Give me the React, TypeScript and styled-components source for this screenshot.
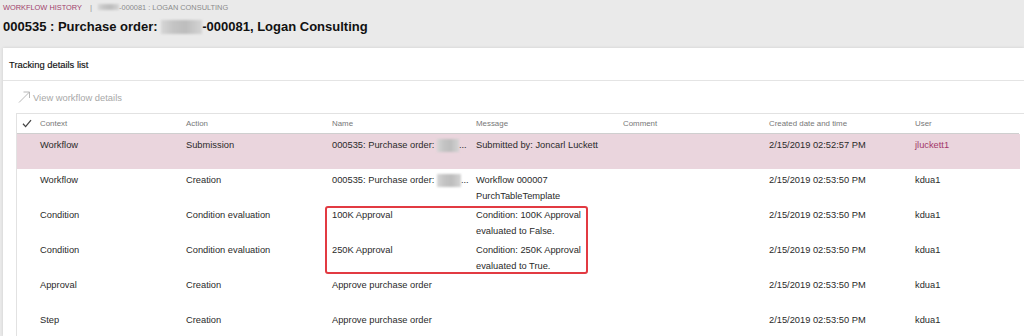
import styled, { createGlobalStyle } from 'styled-components';

const GlobalStyle = createGlobalStyle`
    html, body {
        margin: 0;
        padding: 0;
        background: #eaeaea;
        font-family: "Liberation Sans", Arial, sans-serif;
        overflow: hidden;
    }
`;

const Page = styled.div`
    width: 1024px;
    height: 336px;
    overflow: hidden;
`;

const Header = styled.div`
    padding: 2px 3px 0;
    height: 48px;
    box-sizing: border-box;
`;

const Breadcrumb = styled.div`
    display: flex;
    align-items: center;
    height: 10px;
    font-size: 7.4px;
    color: #8a8a8a;
    margin-bottom: 7px;
`;

const Crumb = styled.span`
    color: #a0406a;
`;

const Sep = styled.span`
    margin: 0 6px 0 8px;
    color: #999;
    font-size: 8px;
`;

const Blur = styled.span<{ $w: number; $h: number }>`
    display: inline-block;
    width: ${p => p.$w}px;
    height: ${p => p.$h}px;
    background: linear-gradient(90deg, #d6d6d6, #c4c4c4 30%, #bdbdbd 60%, #d4d4d4);
    filter: blur(0.8px);
    vertical-align: middle;
`;

const Title = styled.h1`
    margin: 0;
    font-size: 13px;
    line-height: 16px;
    font-weight: bold;
    color: #111;
    display: flex;
    align-items: center;
    white-space: pre;
`;

const Panel = styled.div`
    margin-left: 3px;
    background: #fff;
    box-shadow: 0 0 3px rgba(0, 0, 0, 0.12);
    height: 288px;
    overflow: hidden;
`;

const PanelHeader = styled.div`
    height: 33px;
    box-sizing: border-box;
    border-bottom: 1px solid #e4e4e4;
    padding-left: 6px;
    display: flex;
    align-items: center;
    font-size: 9.4px;
    color: #111;
    -webkit-text-stroke: 0.15px #111;
`;

const Toolbar = styled.div`
    height: 32px;
    display: flex;
    align-items: center;
    padding-left: 15px;
    gap: 2px;
    font-size: 9.4px;
    color: #a8a8a8;
`;

const Table = styled.div`
    margin-left: 13px;
    border-top: 1px solid #e2e2e2;
    border-left: 1px solid #e2e2e2;
    height: 240px;
`;

const Grid = styled.div`
    display: grid;
    grid-template-columns: 23px 146px 146px 144px 147px 146px 146px 104px;
`;

const HeadRow = styled(Grid)`
    height: 19px;
    align-items: center;
    border-bottom: 1px solid #cfcfcf;
    width: 1002px;
    font-size: 7.9px;
    color: #777;
`;

const CheckCell = styled.div`
    display: flex;
    align-items: center;
    padding-left: 5px;
`;

const Body = styled.div`
    position: relative;
    width: 1003px;
`;

const Row = styled(Grid)<{ $selected?: boolean }>`
    height: 35px;
    box-sizing: border-box;
    padding-top: 3px;
    background: ${p => (p.$selected ? '#ead5dd' : 'transparent')};
    font-size: 9.3px;
    line-height: 16px;
    color: #2a2a2a;
`;

const Cell = styled.div<{ $accent?: boolean }>`
    color: ${p => (p.$accent ? '#a3386a' : 'inherit')};
    white-space: nowrap;
`;

const Wrap = styled.div`
    white-space: normal;
    padding-right: 20px;
`;

const Highlight = styled.div`
    position: absolute;
    left: 308px;
    top: 72px;
    width: 263px;
    height: 68px;
    border: 2px solid #e23a42;
    border-radius: 3px;
    box-sizing: border-box;
    pointer-events: none;
`;

const CheckIcon = () => (
    <svg width="10" height="9" viewBox="0 0 10 9">
        <path d="M1 4.8 L3.6 7.6 L9 1.2" fill="none" stroke="#444" strokeWidth="1.3" />
    </svg>
);

const ArrowIcon = () => (
    <svg width="13" height="12" viewBox="0 0 13 12">
        <path d="M1 11.5 L11.5 1" stroke="#b0b0b0" strokeWidth="0.9" fill="none" />
        <path d="M5.5 1 L11.5 1 L11.5 7" stroke="#b0b0b0" strokeWidth="0.9" fill="none" />
    </svg>
);

const POName = ({ blur }: { blur: number }) => (
    <Cell>
        000535: Purchase order: <Blur $w={blur} $h={13} />...
    </Cell>
);

const rows = [
    { context: 'Condition', action: 'Condition evaluation', name: '100K Approval', message: 'Condition: 100K Approval evaluated to False.' },
    { context: 'Condition', action: 'Condition evaluation', name: '250K Approval', message: 'Condition: 250K Approval evaluated to True.' },
    { context: 'Approval', action: 'Creation', name: 'Approve purchase order', message: '' },
    { context: 'Step', action: 'Creation', name: 'Approve purchase order', message: '' },
];

export default function App() {
    return (
        <Page>
            <GlobalStyle />
            <Header>
                <Breadcrumb>
                    <Crumb>WORKFLOW HISTORY</Crumb>
                    <Sep>|</Sep>
                    <Blur $w={21} $h={6} />
                    <span>-000081 : LOGAN CONSULTING</span>
                </Breadcrumb>
                <Title>
                    000535 : Purchase order: <Blur $w={41} $h={14} />-000081, Logan Consulting
                </Title>
            </Header>
            <Panel>
                <PanelHeader>Tracking details list</PanelHeader>
                <Toolbar>
                    <ArrowIcon />
                    <span>View workflow details</span>
                </Toolbar>
                <Table>
                    <HeadRow>
                        <CheckCell><CheckIcon /></CheckCell>
                        <Cell>Context</Cell>
                        <Cell>Action</Cell>
                        <Cell>Name</Cell>
                        <Cell>Message</Cell>
                        <Cell>Comment</Cell>
                        <Cell>Created date and time</Cell>
                        <Cell>User</Cell>
                    </HeadRow>
                    <Body>
                        <Row $selected>
                            <div />
                            <Cell>Workflow</Cell>
                            <Cell>Submission</Cell>
                            <POName blur={22} />
                            <Cell>Submitted by: Joncarl Luckett</Cell>
                            <Cell />
                            <Cell>2/15/2019 02:52:57 PM</Cell>
                            <Cell $accent>jluckett1</Cell>
                        </Row>
                        <Row>
                            <div />
                            <Cell>Workflow</Cell>
                            <Cell>Creation</Cell>
                            <POName blur={24} />
                            <Wrap>Workflow 000007 PurchTableTemplate</Wrap>
                            <Cell />
                            <Cell>2/15/2019 02:53:50 PM</Cell>
                            <Cell>kdua1</Cell>
                        </Row>
                        {rows.map((r, i) => (
                            <Row key={i}>
                                <div />
                                <Cell>{r.context}</Cell>
                                <Cell>{r.action}</Cell>
                                <Cell>{r.name}</Cell>
                                <Wrap>{r.message}</Wrap>
                                <Cell />
                                <Cell>2/15/2019 02:53:50 PM</Cell>
                                <Cell>kdua1</Cell>
                            </Row>
                        ))}
                        <Highlight />
                    </Body>
                </Table>
            </Panel>
        </Page>
    );
}
